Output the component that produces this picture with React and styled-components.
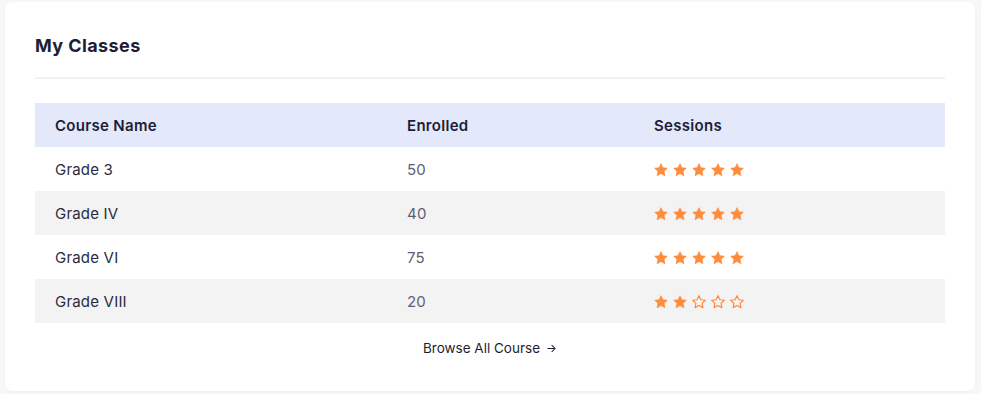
import styled, {createGlobalStyle} from "styled-components";

const GlobalStyle = createGlobalStyle`
  body {
    margin: 0;
    background: #f7f7f8;
    font-family: "Inter", "Liberation Sans", sans-serif;
  }
`;

const Page = styled.div`
  padding: 2px 6px 5px 5px;
`;

const Card = styled.div`
  background: #ffffff;
  border-radius: 8px;
  padding: 30px 30px 35px;
  box-shadow: 0 1px 3px rgba(0, 0, 0, 0.03);
`;

const Title = styled.h2`
  font-size: 18px;
  font-weight: 700;
  letter-spacing: 0.4px;
  color: #1d1e36;
  margin: 0;
  padding: 2px 0 0;
  line-height: 24px;
`;

const Divider = styled.hr`
  border: none;
  height: 2px;
  background: #f1f1f4;
  margin: 19px 0 24px;
`;

const Table = styled.table`
  width: 100%;
  border-collapse: collapse;
  table-layout: fixed;
`;

const HeadRow = styled.tr`
  background: #e4e8fb;
`;

const Th = styled.th`
  text-align: left;
  height: 44px;
  padding: 0 20px;
  font-size: 15px;
  font-weight: 600;
  letter-spacing: 0.3px;
  color: #1d1e36;
  width: ${({$w}) => $w || "auto"};
`;

const Row = styled.tr`
  background: ${({$striped}) => ($striped ? "#f3f3f3" : "#ffffff")};
`;

const Td = styled.td`
  height: 44px;
  padding: 0 20px;
  font-size: 15px;
  letter-spacing: 0.2px;
  color: ${({$muted}) => ($muted ? "#5f6072" : "#2a2b3d")};
`;

const Stars = styled.div`
  display: flex;
  gap: 3px;
  align-items: center;
  padding-top: 2px;
  margin-left: -1px;
`;

const Footer = styled.div`
  display: flex;
  justify-content: center;
  padding-top: 17px;
`;

const BrowseLink = styled.a`
  display: flex;
  align-items: center;
  gap: 6px;
  font-size: 13.5px;
  color: #1d1e36;
  text-decoration: none;
  cursor: pointer;
`;

const STAR =
  "M12 2.5l2.9 6.1 6.6.8-4.9 4.6 1.3 6.6L12 17.3l-5.9 3.3 1.3-6.6-4.9-4.6 6.6-.8z";

function Star({filled}) {
  return (
    <svg width="16" height="16" viewBox="0 0 24 24">
      <path
        d={STAR}
        fill={filled ? "#ff8b3d" : "none"}
        stroke="#ff8b3d"
        strokeWidth={filled ? 1 : 1.8}
        strokeLinejoin="round"
      />
    </svg>
  );
}

const classes = [
  {name: "Grade 3", enrolled: 50, rating: 5},
  {name: "Grade IV", enrolled: 40, rating: 5},
  {name: "Grade VI", enrolled: 75, rating: 5},
  {name: "Grade VIII", enrolled: 20, rating: 2}
];

export default function App() {
  return (
    <>
      <GlobalStyle />
      <Page>
        <Card>
          <Title>My Classes</Title>
          <Divider />
          <Table>
            <thead>
              <HeadRow>
                <Th $w="312px">Course Name</Th>
                <Th $w="207px">Enrolled</Th>
                <Th>Sessions</Th>
              </HeadRow>
            </thead>
            <tbody>
              {classes.map((c, i) => (
                <Row key={c.name} $striped={i % 2 === 1}>
                  <Td>{c.name}</Td>
                  <Td $muted>{c.enrolled}</Td>
                  <Td>
                    <Stars>
                      {[1, 2, 3, 4, 5].map(n => (
                        <Star key={n} filled={n <= c.rating} />
                      ))}
                    </Stars>
                  </Td>
                </Row>
              ))}
            </tbody>
          </Table>
          <Footer>
            <BrowseLink>
              Browse All Course
              <svg width="11" height="11" viewBox="0 0 24 24" fill="none" stroke="#1d1e36" strokeWidth="2.2" strokeLinecap="round" strokeLinejoin="round">
                <path d="M4 12h16M13 5l7 7-7 7" />
              </svg>
            </BrowseLink>
          </Footer>
        </Card>
      </Page>
    </>
  );
}
